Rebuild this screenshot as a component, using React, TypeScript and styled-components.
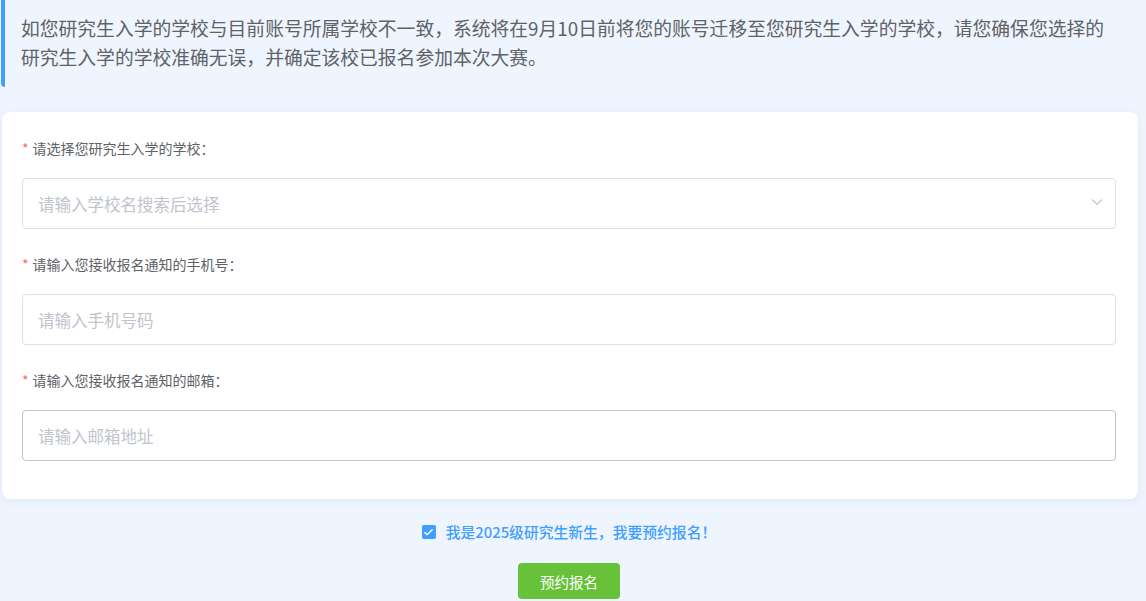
import React from 'react';
import styled, { createGlobalStyle } from 'styled-components';
import { Check } from 'lucide-react';

const GlobalStyle = createGlobalStyle`
    html, body {
        margin: 0;
        padding: 0;
        background: #eef5ff;
        font-family: "Noto Sans CJK SC", "Noto Sans", "Liberation Sans", sans-serif;
    }
`;

const Page = styled.div`
    width: 1136px;
    padding: 0 8px 0 2px;
    min-height: 601px;
    box-sizing: content-box;
`;

const Notice = styled.div`
    margin-left: -1px;
    padding: 13px 20px 16px 16px;
    border-left: 4px solid #409eff;
    border-bottom-left-radius: 4px;

    font-size: 18.8px;
    line-height: 29px;
    color: #606266;
`;

const Card = styled.section`
    margin-top: 25px;
    padding: 26px 22px 38px 20px;

    background: #fff;
    border-radius: 8px;
    box-shadow: 0 2px 10px rgba(120, 150, 200, 0.12);
`;

const FormItem = styled.div`
    & + & {
        margin-top: 25px;
    }
`;

const Label = styled.label`
    display: block;
    margin-bottom: 20px;

    font-size: 14px;
    line-height: 20px;
    color: #606266;

    &::before {
        content: "*";
        color: #f56c6c;
        margin-right: 4px;
    }
`;

const InputBox = styled.div<{ $active?: boolean }>`
    display: flex;
    align-items: center;
    height: 51px;
    padding: 0 12px 0 15px;
    box-sizing: border-box;

    border: 1px solid ${p => (p.$active ? '#c0c4cc' : '#dcdfe6')};
    border-radius: 4px;
    background: #fff;
`;

const Input = styled.input`
    flex: 1;
    border: none;
    outline: none;
    padding: 0;
    background: transparent;

    font-family: inherit;
    font-size: 16.5px;
    color: #606266;

    &::placeholder {
        color: #c0c4cc;
    }
`;

const Arrow = styled.svg`
    flex: none;
    margin-top: -4px;
`;

const Agree = styled.div`
    display: flex;
    justify-content: center;
    align-items: center;
    gap: 10px;
    margin-top: 23px;
    margin-left: -2px;

    font-size: 14.8px;
    font-weight: 500;
    line-height: 20px;
    color: #409eff;
`;

const CheckBox = styled.span`
    display: inline-flex;
    align-items: center;
    justify-content: center;
    width: 14px;
    height: 14px;
    border-radius: 2px;
    background: #409eff;
    color: #fff;
`;

const Actions = styled.div`
    display: flex;
    justify-content: center;
    margin-top: 21px;
    margin-left: -2px;
`;

const SubmitButton = styled.button`
    width: 102px;
    height: 36px;
    border: none;
    border-radius: 4px;
    background: #67c23a;

    font-family: inherit;
    font-size: 14.5px;
    color: #fff;
    cursor: pointer;
`;

const fields = [
    { label: '请选择您研究生入学的学校：', placeholder: '请输入学校名搜索后选择', select: true },
    { label: '请输入您接收报名通知的手机号：', placeholder: '请输入手机号码' },
    { label: '请输入您接收报名通知的邮箱：', placeholder: '请输入邮箱地址', active: true },
];

function App() {
    return (
    <>
        <GlobalStyle />
        <Page>
            <Notice>
                如您研究生入学的学校与目前账号所属学校不一致，系统将在9月10日前将您的账号迁移至您研究生入学的学校，请您确保您选择的研究生入学的学校准确无误，并确定该校已报名参加本次大赛。
            </Notice>
            <Card>
                {fields.map((f, i) => (
                    <FormItem key={i}>
                        <Label>{f.label}</Label>
                        <InputBox $active={f.active}>
                            <Input placeholder={f.placeholder} />
                            {f.select && (
                                <Arrow width="12" height="8" viewBox="0 0 12 8">
                                    <polyline points="1,1.5 6,6.5 11,1.5" fill="none" stroke="#c0c4cc" strokeWidth="1.1" />
                                </Arrow>
                            )}
                        </InputBox>
                    </FormItem>
                ))}
            </Card>
            <Agree>
                <CheckBox><Check size={11} strokeWidth={3} /></CheckBox>
                我是2025级研究生新生，我要预约报名！
            </Agree>
            <Actions>
                <SubmitButton>预约报名</SubmitButton>
            </Actions>
        </Page>
    </>);
}
export default App;
